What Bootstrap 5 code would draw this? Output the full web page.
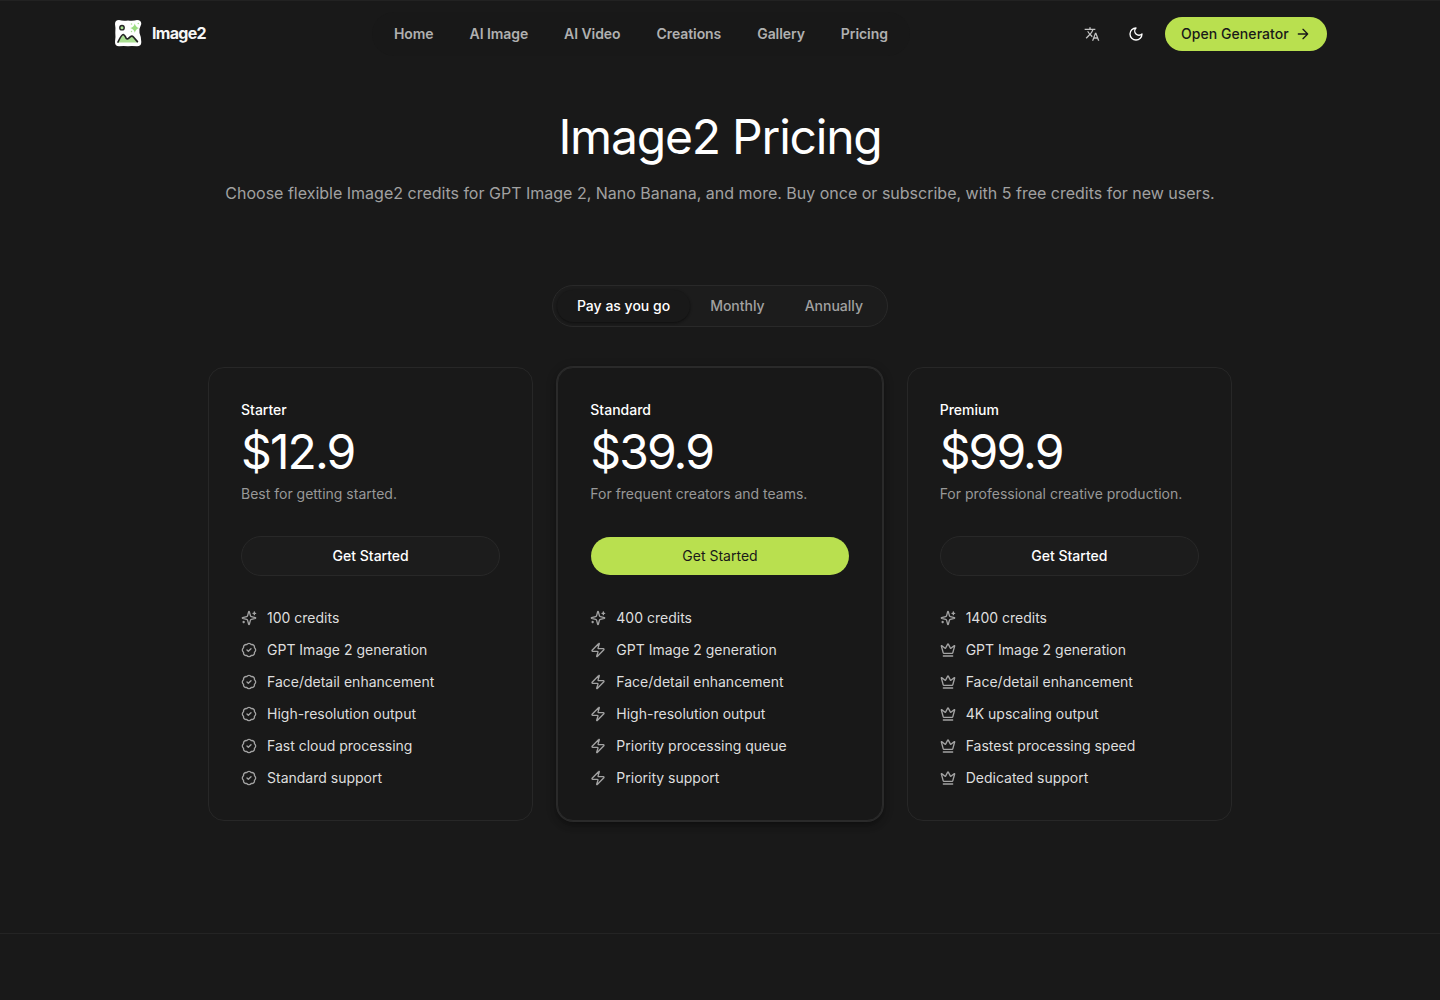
<!DOCTYPE html>
<html lang="en" data-bs-theme="dark">
<head>
<meta charset="utf-8">
<meta name="viewport" content="width=device-width, initial-scale=1">
<title>Image2 Pricing</title>
<link href="https://cdn.jsdelivr.net/npm/bootstrap@5.3.0/dist/css/bootstrap.min.css" rel="stylesheet">
<style>
:root{--page:#191919;--line:#272727;--soft:#a1a1a1;--lime:#b9e04f}
body{background:var(--page);color:#fff;font-family:Inter,"Liberation Sans",sans-serif;font-size:14px;line-height:20px;min-height:1000px}
svg{flex:none}
.ico{width:16px;height:16px;fill:none;stroke:currentColor;stroke-width:2;stroke-linecap:round;stroke-linejoin:round}
.site-head{height:68px;border-top:1px solid #222}
.head-in{width:1214px;display:grid;grid-template-columns:259px 538px 1fr;align-items:center;height:66px}
.brand-link{gap:8px;height:32px;margin-top:-2px}
.brand-name{font-size:16px;font-weight:700;letter-spacing:-.7px;color:#f5f5f5;margin-left:1px}
.nav-pill{height:44px;border-radius:22px;background:#181818;gap:36px;padding:0 22px}
.nav-pill a{color:#b0b0b0;font-weight:600;letter-spacing:-.075px;text-decoration:none;white-space:nowrap}
.btn-lime{--bs-btn-bg:var(--lime);--bs-btn-color:#191919;--bs-btn-hover-bg:#c5ea60;--bs-btn-hover-color:#191919;border:0;border-radius:20px;font-size:14px;line-height:20px}
.open-btn{width:162px;height:34px;padding:0 16px;margin-left:7px;font-weight:500;letter-spacing:.06px;white-space:nowrap}
.icon-btn{width:44px;height:34px;background:none;border:0;padding:0 0 2px}
.title-xl{font-size:48px;line-height:48px;font-weight:400;letter-spacing:-1.2px;margin:45px 0 20px}
.intro{font-size:16px;line-height:24px;color:var(--soft)}
.switcher{margin-top:80px;padding:4px;border:1px solid #292929;border-radius:21px;background:#1c1c1c}
.switcher button{height:32px;border:0;border-radius:16px;padding:0 20px;background:none;color:var(--soft);font-weight:500}
.switcher .on{background:#191919;color:#fff;box-shadow:0 1px 3px rgba(0,0,0,.3),0 1px 2px rgba(0,0,0,.2)}
.plans{width:1024px;margin:40px auto 0;display:grid;grid-template-columns:repeat(3,1fr);gap:24px}
.plan{border:1px solid var(--line);border-radius:16px;padding:32px;background:#191919}
.plan-top{background:#181818;border-color:#2a2a2a;box-shadow:0 0 0 1px #2a2a2a,0 4px 6px rgba(0,0,0,.3),0 2px 12px rgba(0,0,0,.18)}
.price{font-size:48px;line-height:48px;letter-spacing:-1.9px;margin:8px 0}
.note{color:#989898}
.buy{height:40px;margin:32px 0;border-radius:20px;font-size:14px;line-height:20px;padding:0}
.buy-dark{background:#1c1c1c;border:1px solid #282828;color:#fff;font-weight:500}
.buy-lime{border:1px solid transparent;background-clip:padding-box}
.feats{gap:12px;color:#dedede}
.feats .ico{color:#a3a3a3}
.feats li{gap:10px}
.foot-line{margin-top:112px;border-top:1px solid #242424}
</style>
</head>
<body>
<svg width="0" height="0" class="position-absolute">
<symbol id="spark" viewBox="0 0 24 24"><path d="M9.937 15.5A2 2 0 0 0 8.5 14.063l-6.135-1.582a.5.5 0 0 1 0-.962L8.5 9.936A2 2 0 0 0 9.937 8.5l1.582-6.135a.5.5 0 0 1 .963 0L14.063 8.5A2 2 0 0 0 15.5 9.937l6.135 1.581a.5.5 0 0 1 0 .964L15.5 14.063a2 2 0 0 0-1.437 1.437l-1.582 6.135a.5.5 0 0 1-.963 0z"/><path d="M20 3v4M22 5h-4M4 17v2M5 18H3"/></symbol>
<symbol id="check" viewBox="0 0 24 24"><path d="M3.85 8.62a4 4 0 0 1 4.78-4.77 4 4 0 0 1 6.74 0 4 4 0 0 1 4.78 4.78 4 4 0 0 1 0 6.74 4 4 0 0 1-4.77 4.78 4 4 0 0 1-6.75 0 4 4 0 0 1-4.78-4.77 4 4 0 0 1 0-6.76Z"/><path d="m9 12 2 2 4-4"/></symbol>
<symbol id="zap" viewBox="0 0 24 24"><path d="M4 14a1 1 0 0 1-.78-1.63l9.9-10.2a.5.5 0 0 1 .86.46l-1.92 6.02A1 1 0 0 0 13 10h7a1 1 0 0 1 .78 1.63l-9.9 10.2a.5.5 0 0 1-.86-.46l1.92-6.02A1 1 0 0 0 11 14z"/></symbol>
<symbol id="crown" viewBox="0 0 24 24"><path d="M11.562 3.266a.5.5 0 0 1 .876 0L15.39 8.87a1 1 0 0 0 1.516.294L21.183 5.5a.5.5 0 0 1 .798.519l-2.834 10.246a1 1 0 0 1-.956.734H5.81a1 1 0 0 1-.957-.734L2.02 6.02a.5.5 0 0 1 .798-.519l4.276 3.664a1 1 0 0 0 1.516-.294zM5 21h14"/></symbol>
</svg>
<header class="site-head">
<div class="head-in mx-auto">
<a class="brand-link d-flex align-items-center text-decoration-none" href="#">
<svg width="30" height="30" viewBox="0 0 30 30"><path d="M6 2Q10 3.2 15 2.4Q20 3.2 24 2Q28.3 2 28.3 6Q25.8 10.500 26.500 15Q28.300 19 28.300 24Q28.300 28.300 24 28.300Q19 27.600 15 28.200Q10 27.600 6 28.300Q2 28.300 2 24Q2.800 19 2.300 15Q2.800 10 2 6Q2 2 6 2Z" fill="#fff"/><path d="M5 24.600Q9 16.600 10.300 16.700Q12 17 13.600 21Q15 22 17.500 19Q19 17.500 20.600 19.300L24.700 24.600Z" fill="#a9df91"/><path d="M5 24Q8.700 16.300 10.300 16.500Q11.500 16.700 13.300 20.500Q14.600 21.800 17.200 18.900Q19 17.500 20.400 19L24.400 23.600" fill="none" stroke="#242424" stroke-width="1.700" stroke-linecap="round"/><circle cx="9" cy="9.700" r="2.200" fill="#a9df91" stroke="#242424" stroke-width="1.400"/><path d="M21.800 5.500Q22.700 9.200 26 10Q22.700 10.900 21.800 14.800Q20.900 10.900 17.300 10Q20.900 9.200 21.800 5.500Z" fill="#9bdc80"/><g fill="#a9df91"><circle cx="18.500" cy="6" r=".8"/><circle cx="25.300" cy="5.500" r=".8"/><circle cx="18.500" cy="13.500" r=".7"/></g></svg>
<span class="brand-name">Image2</span></a>
<nav class="nav-pill d-flex align-items-center"><a href="#">Home</a><a href="#">AI Image</a><a href="#">AI Video</a><a href="#">Creations</a><a href="#">Gallery</a><a href="#">Pricing</a></nav>
<div class="d-flex align-items-center justify-content-end">
<button class="icon-btn" aria-label="Language"><svg class="ico" viewBox="0 0 24 24"><g fill="#c4c4c4" stroke="none"><path d="M12.87 15.07l-2.54-2.51.03-.03A17.52 17.520 0 0 0 14.070 6H17V4h-7V2H8v2H1v2h11.170C11.500 7.920 10.440 9.750 9 11.350 8.070 10.320 7.300 9.190 6.690 8h-2c.73 1.630 1.730 3.170 2.980 4.560l-5.090 5.020L4 19l5-5 3.110 3.110.76-2.040zM18.500 10h-2L12 22h2l1.120-3h4.750L21 22h2l-4.500-12zm-2.620 7l1.620-4.330L19.120 17h-3.240z"/></g></svg></button>
<button class="icon-btn text-white" aria-label="Theme"><svg class="ico" viewBox="0 0 24 24"><path d="M12 3a6 6 0 0 0 9 9 9 9 0 1 1-9-9Z"/></svg></button>
<button class="btn btn-lime open-btn d-flex align-items-center justify-content-between flex-shrink-0"><span>Open Generator</span>
<svg class="ico" viewBox="0 0 24 24"><path d="M5 12h14M12 5l7 7-7 7"/></svg></button>
</div>
</div>
</header>
<main>
<section class="text-center">
<h1 class="title-xl">Image2 Pricing</h1>
<p class="intro m-0">Choose flexible Image2 credits for GPT Image 2, Nano Banana, and more. Buy once or subscribe, with 5 free credits for new users.</p>
<div class="switcher d-inline-flex"><button class="on">Pay as you go</button><button>Monthly</button><button>Annually</button></div>
</section>
<section class="plans">
<article class="plan"><div class="fw-medium plan-name">Starter</div><div class="price">$12.9</div><div class="note">Best for getting started.</div>
<button class="btn buy buy-dark w-100 d-block">Get Started</button>
<ul class="feats list-unstyled d-flex flex-column m-0">
<li class="d-flex align-items-center"><svg class="ico"><use href="#spark"/></svg>100 credits</li>
<li class="d-flex align-items-center"><svg class="ico"><use href="#check"/></svg>GPT Image 2 generation</li>
<li class="d-flex align-items-center"><svg class="ico"><use href="#check"/></svg>Face/detail enhancement</li>
<li class="d-flex align-items-center"><svg class="ico"><use href="#check"/></svg>High-resolution output</li>
<li class="d-flex align-items-center"><svg class="ico"><use href="#check"/></svg>Fast cloud processing</li>
<li class="d-flex align-items-center"><svg class="ico"><use href="#check"/></svg>Standard support</li>
</ul></article>
<article class="plan plan-top"><div class="fw-medium plan-name">Standard</div><div class="price">$39.9</div><div class="note">For frequent creators and teams.</div>
<button class="btn btn-lime buy buy-lime w-100 d-block">Get Started</button>
<ul class="feats list-unstyled d-flex flex-column m-0">
<li class="d-flex align-items-center"><svg class="ico"><use href="#spark"/></svg>400 credits</li>
<li class="d-flex align-items-center"><svg class="ico"><use href="#zap"/></svg>GPT Image 2 generation</li>
<li class="d-flex align-items-center"><svg class="ico"><use href="#zap"/></svg>Face/detail enhancement</li>
<li class="d-flex align-items-center"><svg class="ico"><use href="#zap"/></svg>High-resolution output</li>
<li class="d-flex align-items-center"><svg class="ico"><use href="#zap"/></svg>Priority processing queue</li>
<li class="d-flex align-items-center"><svg class="ico"><use href="#zap"/></svg>Priority support</li>
</ul></article>
<article class="plan"><div class="fw-medium plan-name">Premium</div><div class="price">$99.9</div><div class="note">For professional creative production.</div>
<button class="btn buy buy-dark w-100 d-block">Get Started</button>
<ul class="feats list-unstyled d-flex flex-column m-0">
<li class="d-flex align-items-center"><svg class="ico"><use href="#spark"/></svg>1400 credits</li>
<li class="d-flex align-items-center"><svg class="ico"><use href="#crown"/></svg>GPT Image 2 generation</li>
<li class="d-flex align-items-center"><svg class="ico"><use href="#crown"/></svg>Face/detail enhancement</li>
<li class="d-flex align-items-center"><svg class="ico"><use href="#crown"/></svg>4K upscaling output</li>
<li class="d-flex align-items-center"><svg class="ico"><use href="#crown"/></svg>Fastest processing speed</li>
<li class="d-flex align-items-center"><svg class="ico"><use href="#crown"/></svg>Dedicated support</li>
</ul></article>
</section>
<div class="foot-line"></div>
</main>
<script src="https://cdn.jsdelivr.net/npm/bootstrap@5.3.0/dist/js/bootstrap.bundle.min.js"></script>
</body>
</html>
